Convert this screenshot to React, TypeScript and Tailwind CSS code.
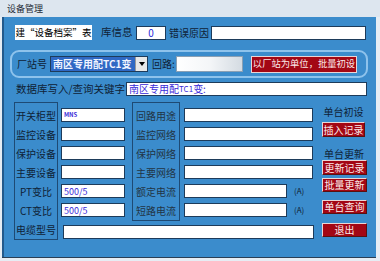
import React from "react";

const F = { fontFamily: '"Noto Sans CJK SC", "Noto Sans", sans-serif' };

function Btn({ children, w = "w-[45px]", h = "h-[15px]" }: { children: React.ReactNode; w?: string; h?: string }) {
  return (
    <div
      className={`${w} ${h} bg-[#a30714] border border-t-[#e8d6d6] border-l-[#e8d6d6] border-r-[#5a1010] border-b-[#5a1010] flex items-center justify-center text-[10px] leading-none text-[#fbe9e9] whitespace-nowrap`}
    >
      {children}
    </div>
  );
}

function Input({ w, children, h = "h-[14px]" }: { w: string; children?: React.ReactNode; h?: string }) {
  return (
    <div className={`${w} ${h} bg-white border border-[#1d3b5a] flex items-center pl-[2px] text-[9px] leading-none text-[#3a2ad8] whitespace-nowrap`}>
      {children}
    </div>
  );
}

function Label({ children, className = "" }: { children: React.ReactNode; className?: string }) {
  return (
    <div className={`h-[19px] flex items-center justify-center text-[10px] leading-none text-[#0f2236] whitespace-nowrap ${className}`}>
      {children}
    </div>
  );
}

export default function App() {
  return (
    <div className="w-[380px] h-[261px] bg-[#e6edf4] flex flex-col overflow-hidden" style={F}>
      <div className="h-[17px] flex items-center pl-[7px] text-[9px] leading-none text-[#1e2a36] bg-[#dde6ef]">
        设备管理
      </div>
      <div className="ml-[2px] w-[374px] h-[240px] bg-[#3b8ccc] border-l-2 border-[#235a8c] flex flex-col">
        {/* Row 1 */}
        <div className="flex items-center mt-[8px] h-[15px] whitespace-nowrap">
          <div className="ml-[11px] w-[77px] h-[15px] bg-white flex items-center justify-center text-[9.5px] leading-none text-black">
            建“设备档案”表
          </div>
          <div className="ml-[9px] w-[33px] text-[10.5px] leading-none text-[#0f2236]">库信息</div>
          <div className="ml-[2px] w-[30px] h-[14px] bg-white border border-[#1d3b5a] flex items-center justify-center text-[10px] leading-none text-[#2a2ad8]">
            0
          </div>
          <div className="ml-[3px] w-[42px] text-[10px] leading-none text-[#0f2236]">错误原因</div>
          <div className="w-[155px] h-[14px] bg-white border border-[#1d3b5a]" />
        </div>

        {/* Row 2 group */}
        <div className="ml-[6px] mt-[10px] w-[358px] h-[28px] rounded-[9px] border-2 border-[#8ec3ec] flex items-center whitespace-nowrap">
          <div className="ml-[5px] w-[32px] text-[10px] leading-none text-[#0f2236]">厂站号</div>
          <div className="ml-[1px] w-[98px] h-[16px] border border-[#1d3b5a] bg-white flex">
            <div className="flex-1 bg-[#2f68c4] flex items-center pl-[2px] text-[10px] font-bold leading-none text-[#f0f4ff]">
              南区专用配TC1变
            </div>
            <div className="w-[12px] bg-[#e8e8e8] border-l border-[#9a9a9a] flex items-center justify-center">
              <div className="w-0 h-0 border-l-[3px] border-r-[3px] border-t-[4px] border-l-transparent border-r-transparent border-t-black" />
            </div>
          </div>
          <div className="ml-[4px] w-[24px] text-[10px] leading-none text-[#0f2236]">回路:</div>
          <div className="w-[67px] h-[16px] bg-gradient-to-r from-white via-[#f4f6f8] to-[#d4dbe2] border border-[#8aa0b4]" />
          <div className="ml-[8px] w-[106px] h-[17px] bg-[#a30714] border border-[#e8d6d6] flex items-center justify-center text-[9.3px] leading-none text-[#fbe9e9]">
            以厂站为单位，批量初设
          </div>
        </div>

        {/* Row 3 */}
        <div className="flex items-center mt-[4px] h-[14px]">
          <div className="ml-[12px] w-[110px] text-[10.5px] leading-none text-[#0f2236] whitespace-nowrap">
            数据库写入/查询关键字
          </div>
          <div className="w-[241px] h-[14px] bg-white border border-[#1d3b5a] flex items-center pl-[2px] text-[10px] leading-none text-[#3a2ad8] whitespace-nowrap">
            南区专用配<span className="text-[8px]">TC1</span>变:
          </div>
        </div>

        {/* Main area */}
        <div className="flex mt-[6px]">
          {/* left box */}
          <div className="ml-[10px] w-[44px] h-[138px] border border-[#1e4a74] pt-[3px] flex flex-col">
            <Label>开关柜型</Label>
            <Label>监控设备</Label>
            <Label>保护设备</Label>
            <Label>主要设备</Label>
            <Label>PT变比</Label>
            <Label>CT变比</Label>
            <Label>电缆型号</Label>
          </div>

          <div className="ml-[3px] flex flex-col">
            <div className="flex">
              <div className="w-[64px] pt-[6px] flex flex-col gap-[5px]">
                <Input w="w-[64px]">
                  <span className="text-[6px] font-bold">MNS</span>
                </Input>
                <Input w="w-[64px]" />
                <Input w="w-[64px]" />
                <Input w="w-[64px]" />
                <Input w="w-[64px]">500/5</Input>
                <Input w="w-[64px]">500/5</Input>
              </div>
              <div className="ml-[7px] w-[48px] h-[119px] border border-[#1e4a74] pt-[3px] flex flex-col">
                <Label className="text-[#223444]">回路用途</Label>
                <Label className="text-[#223444]">监控网络</Label>
                <Label className="text-[#223444]">保护网络</Label>
                <Label className="text-[#223444]">主要网络</Label>
                <Label className="text-[#223444]">额定电流</Label>
                <Label className="text-[#223444]">短路电流</Label>
              </div>
              <div className="ml-[4px] w-[130px] pt-[6px] flex flex-col gap-[5px]">
                <Input w="w-[129px]" />
                <Input w="w-[129px]" />
                <Input w="w-[129px]" />
                <Input w="w-[129px]" />
                <div className="flex items-center">
                  <Input w="w-[103px]" />
                  <span className="ml-[7px] text-[8px] leading-none text-[#102030]">(A)</span>
                </div>
                <div className="flex items-center">
                  <Input w="w-[103px]" />
                  <span className="ml-[7px] text-[8px] leading-none text-[#102030]">(A)</span>
                </div>
              </div>
            </div>
            <div className="mt-[4px] ml-[2px]">
              <Input w="w-[251px]" />
            </div>
          </div>

          {/* right column */}
          <div className="ml-[8px] w-[46px] flex flex-col pt-[4px]">
            <div className="w-[43px] h-[12px] flex items-center justify-center text-[10px] leading-none text-[#0f2236] whitespace-nowrap">单台初设</div>
            <div className="mt-[4px]">
              <Btn w="w-[43px]">插入记录</Btn>
            </div>
            <div className="mt-[11px] w-[44px] h-[12px] flex items-center justify-center text-[10px] leading-none text-[#0f2236] whitespace-nowrap">单台更新</div>
            <Btn>更新记录</Btn>
            <div className="mt-[3px]">
              <Btn h="h-[14px]">批量更新</Btn>
            </div>
            <div className="mt-[8px]">
              <Btn h="h-[14px]">单台查询</Btn>
            </div>
            <div className="mt-[9px]">
              <Btn h="h-[14px]">退出</Btn>
            </div>
          </div>
        </div>
      </div>
      <div className="ml-[2px] w-[374px] h-[1px] bg-[#2a3f55]" />
    </div>
  );
}
